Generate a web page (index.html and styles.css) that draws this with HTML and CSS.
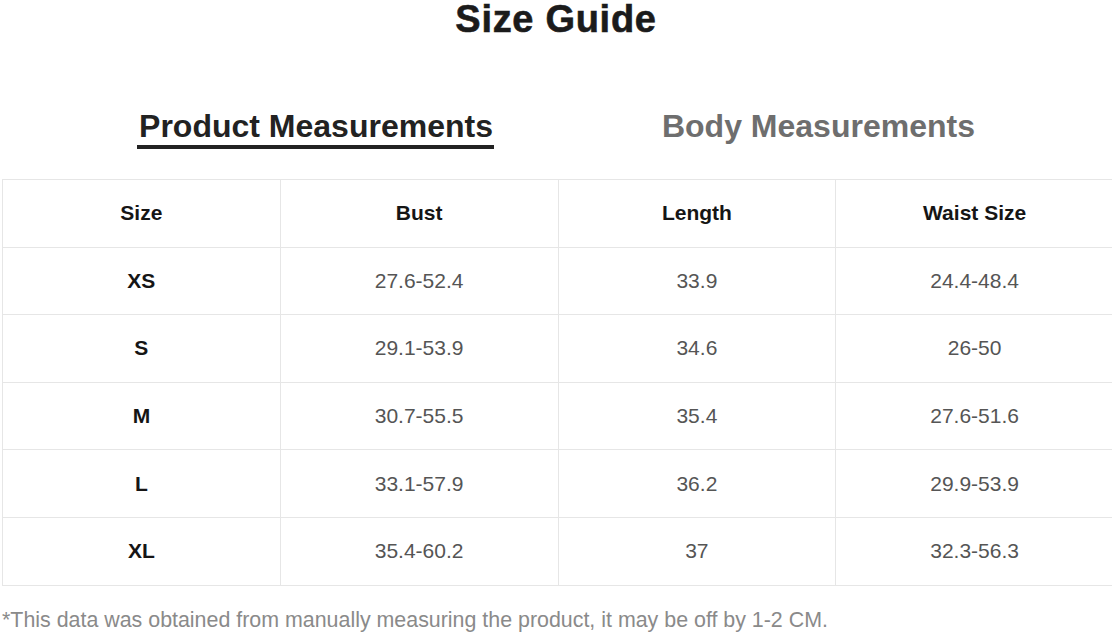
FILE: index.html
```html
<!DOCTYPE html>
<html>
<head>
<meta charset="utf-8">
<link rel="stylesheet" href="styles.css">
</head>
<body>
<div class="page">
  <h1 class="title">Size Guide</h1>
  <div class="tabs">
    <div class="tab active">Product Measurements</div>
    <div class="tab">Body Measurements</div>
  </div>
  <table class="sizes">
    <thead>
      <tr><th>Size</th><th>Bust</th><th>Length</th><th>Waist Size</th></tr>
    </thead>
    <tbody>
      <tr><th>XS</th><td>27.6-52.4</td><td>33.9</td><td>24.4-48.4</td></tr>
      <tr><th>S</th><td>29.1-53.9</td><td>34.6</td><td>26-50</td></tr>
      <tr><th>M</th><td>30.7-55.5</td><td>35.4</td><td>27.6-51.6</td></tr>
      <tr><th>L</th><td>33.1-57.9</td><td>36.2</td><td>29.9-53.9</td></tr>
      <tr><th>XL</th><td>35.4-60.2</td><td>37</td><td>32.3-56.3</td></tr>
    </tbody>
  </table>
  <p class="note">*This data was obtained from manually measuring the product, it may be off by 1-2 CM.</p>
</div>
</body>
</html>
```

FILE: styles.css
```css
html, body {
  margin: 0;
  padding: 0;
  background: #fff;
  overflow: hidden;
}
body {
  font-family: "Liberation Sans", Arial, sans-serif;
  width: 1112px;
  height: 634px;
}
.page {
  display: flex;
  flex-direction: column;
}
.title {
  margin: 0;
  text-align: center;
  font-size: 38px;
  line-height: 38px;
  font-weight: 700;
  color: #1b1b1b;
  letter-spacing: 0.7px;
  -webkit-text-stroke: 0.6px #1b1b1b;
}
.tabs {
  display: flex;
  justify-content: center;
  gap: 168px;
  margin-top: 70px;
}
.tab {
  font-size: 32px;
  line-height: 36px;
  font-weight: 700;
  color: #6e6e6e;
  padding-bottom: 1px;
  border-bottom: 4px solid transparent;
}
.tab.active {
  color: #222;
  border-bottom-color: #222;
  padding-left: 2px;
  padding-right: 1px;
}
.sizes {
  margin-top: 30px;
  margin-left: 2px;
  width: 1112px;
  border-collapse: collapse;
  table-layout: fixed;
}
.sizes th, .sizes td {
  border: 1px solid #e6e6e6;
  height: 66.6px;
  padding: 0;
  text-align: center;
  vertical-align: middle;
}
.sizes th {
  font-size: 21px;
  font-weight: 700;
  color: #151515;
}
.sizes td {
  font-size: 21px;
  color: #555;
}
.note {
  margin: 22px 0 0 2px;
  font-size: 21.4px;
  line-height: 24px;
  color: #8a8a8a;
}
```
